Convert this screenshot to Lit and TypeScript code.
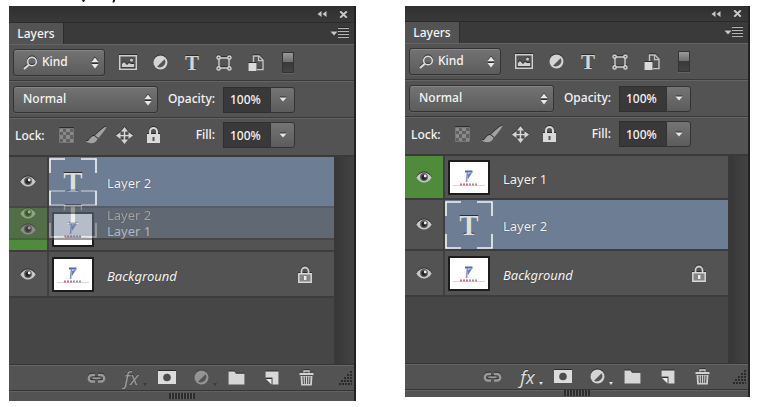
import { LitElement, html, css, svg, nothing, TemplateResult } from "lit";
import { customElement, property } from "lit/decorators.js";
import { classMap } from "lit/directives/class-map.js";

interface Layer {
  name: string;
  kind: "text" | "image";
  selected?: boolean;
  marked?: boolean;
  locked?: boolean;
}

const icon = (w: number, h: number, body: TemplateResult) =>
  html`<svg class="icon" width=${w} height=${h} viewBox="0 0 ${w} ${h}" aria-hidden="true">${body}</svg>`;

const icons = {
  search: icon(15, 14, svg`<circle cx="9" cy="5.5" r="4.3" fill="none" stroke="#dcdcdc" stroke-width="1.6"/><path d="M6 8.5L1 13" stroke="#dcdcdc" stroke-width="2"/>`),
  updown: icon(8, 12, svg`<path d="M0.5 5L4 0.5L7.5 5zM0.5 7L4 11.5L7.5 7z" fill="#e8e8e8"/>`),
  down: icon(8, 5, svg`<path d="M0.5 0.5h7L4 4.5z" fill="#e8e8e8"/>`),
  collapse: icon(10, 6, svg`<path d="M4.5 0v6L0.5 3zM9.5 0v6L5.5 3z" fill="#c8c8c8"/>`),
  close: icon(9, 7, svg`<path d="M1.2 0.3L7.8 6.7M7.8 0.3L1.2 6.7" stroke="#c8c8c8" stroke-width="2"/>`),
  menu: icon(20, 11, svg`<path d="M0.5 3.5h7L4 7.5z" fill="#c8c8c8"/><path d="M8 0.5h11M8 3.5h11M8 6.5h11M8 9.5h11" stroke="#b4b4b4"/>`),
  image: icon(18, 15, svg`<path d="M0.75 0.75h16.5v13.5H0.75z" fill="none" stroke="#cfcfcf" stroke-width="1.5"/><path d="M3 12V9l2-2 2 2 1 1 2-2 2 1 3 0v3z" fill="#cfcfcf"/><circle cx="12.5" cy="5" r="1.5" fill="#cfcfcf"/>`),
  adjust: icon(15, 15, svg`<circle cx="7.5" cy="7.5" r="7" fill="#d4d4d4"/><path d="M11.6 4.2A5.6 5.6 0 0 1 4 11.8z" fill="#555"/>`),
  shape: icon(16, 16, svg`<path d="M4 3h8M4 13h8M3 4v8M13 4v8" stroke="#cfcfcf" stroke-width="1.5"/><g fill="#555" stroke="#d4d4d4" stroke-width="1.5"><circle cx="2.6" cy="2.6" r="1.6"/><circle cx="13.4" cy="2.6" r="1.6"/><circle cx="2.6" cy="13.4" r="1.6"/><circle cx="13.4" cy="13.4" r="1.6"/></g>`),
  smart: icon(16, 16, svg`<path d="M5.5 7V1h5.5l4 4v9.5H9" fill="none" stroke="#c4c4c4" stroke-width="1.5"/><path d="M10.5 1v4.5H15" fill="none" stroke="#c4c4c4" stroke-width="1.3"/><path d="M0.5 8h8v8h-8z" fill="#dadada"/>`),
  checker: icon(15, 15, svg`<path d="M0.5 0.5h14v14h-14z" fill="#606060" stroke="#777"/><path d="M1 1h3v3H1zM7 1h4v3H7zM4 4h3v3H4zM11 4h3v3h-3zM1 7h3v4H1zM7 7h4v4H7zM4 11h3v3H4zM11 11h3v3h-3z" fill="#8a8a8a"/>`),
  brush: icon(22, 18, svg`<path d="M21.5 0.5Q22 2 13.5 12L10 9.5Q19 0.5 21.5 0.5z" fill="#a2a2a2"/><path d="M9.5 10L12.5 12.5Q11.5 16.8 7 17.3Q3 17.5 0.5 15.5Q4 15 5 12.5Q6.5 9.5 9.5 10z" fill="#a2a2a2"/>`),
  move: icon(17, 17, svg`<path d="M8.5 2v13M2 8.5h13" stroke="#d4d4d4" stroke-width="1.6"/><path d="M8.5 0L12 4.5H5zM8.5 17L12 12.5H5zM0 8.5L4.5 5v7zM17 8.5L12.5 5v7z" fill="#d4d4d4"/>`),
  lock: icon(13, 16, svg`<path d="M3 8V4.5a3.5 3.5 0 0 1 7 0V8" fill="none" stroke="#d8d8d8" stroke-width="2"/><path d="M0 7h13v9H0z" fill="#dadada"/><path d="M5.5 10h2v4h-2z" fill="#555"/>`),
  rowLock: icon(14, 17, svg`<path d="M3.5 8V5a3.5 3.5 0 0 1 7 0v3" fill="none" stroke="#cfcfcf" stroke-width="1.8"/><path d="M0.8 7.8h12.4v8.4H0.8z" fill="#858585" stroke="#d8d8d8" stroke-width="1.5"/><path d="M6 10h2.4v4H6z" fill="#eee"/>`),
  eye: icon(16, 11, svg`<path d="M0.3 5.5Q3.5 0.4 8 0.4T15.7 5.5Q12.5 10.6 8 10.6T0.3 5.5z" fill="#c8c8c8"/><circle cx="8" cy="5" r="3.9" fill="#5c5c5c"/><circle cx="8" cy="5.2" r="2.5" fill="#222"/><circle cx="9.2" cy="4" r="1.4" fill="#eee"/>`),
  link: icon(19, 10, svg`<path d="M8 2H5a3 3 0 0 0 0 6.5h3M11 2h3a3 3 0 0 1 0 6.5h-3" fill="none" stroke="#999" stroke-width="2.4"/><path d="M5.5 5.2h8" stroke="#999" stroke-width="1.8"/>`),
  mask: icon(18, 13, svg`<path d="M0 0h18v13H0z" fill="#dcdcdc"/><circle cx="9" cy="6.5" r="3.8" fill="#4e4e4e"/>`),
  folder: icon(17, 14, svg`<path d="M0.5 0.5h6l1.5 2.2h8.5V13.5H0.5z" fill="#d6d6d6"/>`),
  page: icon(14, 14, svg`<path d="M0.5 0.5h13v13h-6V6.5h-7z" fill="#d8d8d8"/><path d="M1 8h5.5v5.5z" fill="#ececec"/>`),
  trash: icon(15, 16, svg`<path d="M5 2.5V1h5v1.5" fill="none" stroke="#cfcfcf" stroke-width="1.4"/><path d="M0.5 2.8h14v2.4H0.5z" fill="#d2d2d2"/><path d="M1.5 6h12L12.8 15.5H2.2z" fill="#cfcfcf"/><path d="M4 6.5l.4 7.5M6.4 6.5v7.5M8.7 6.5v7.5M11 6.5l-.4 7.5" stroke="#505050" stroke-width="1.1"/>`),
  corner: icon(13, 14, svg`<g stroke="#2b2b2b" stroke-width="2" stroke-dasharray="2 1"><path d="M11 1h2M8 4h5M5 7h8M2 10h11M0 13h13"/></g>`),
};

const picture = svg`
  <path d="M0 0h38v31H0z" fill="#fff"/>
  <path d="M15 9.5h7.5" stroke="#5566ae" stroke-width="2"/>
  <path d="M17.5 10l-1 10" stroke="#8390c4" stroke-width="1.6"/>
  <path d="M22.5 10L18 17V12z" fill="#6a79b8"/>
  <path d="M3 23.5h32" stroke="#d3d9e3"/>
  <path d="M10 22.5h9" stroke="#cf6a80" stroke-width="2" stroke-dasharray="2 1"/>
  <path d="M19 22.5h8" stroke="#ab8aac" stroke-width="2" stroke-dasharray="2 1"/>`;

@customElement("layer-row")
class LayerRow extends LitElement {
  @property({ attribute: false }) layer!: Layer;

  static styles = css`
    :host { display: block; }
    .row {
      display: grid;
      grid-template-columns: 38px 1fr;
      border-bottom: 2px solid #3c3c3c;
      background: #535353;
      color: #f4f4f4;
      height: 44px;
      box-sizing: border-box;
    }
    .row.background { height: 46px; }
    .row.selected { height: 51px; }
    .eye {
      display: grid;
      place-items: center;
      border: 0;
      border-right: 2px solid #404040;
      padding: 0;
      width: 40px;
      background: #535353;
    }
    .marked .eye { background: #4f8b3a; }
    .body {
      display: flex;
      align-items: center;
      margin-left: 2px;
      padding: 0 22px 0 3px;
    }
    .selected .body { background: #6c7d94; padding-left: 0; }
    .thumb { border: 2px solid #1c1c1c; border-radius: 1px; display: block; }
    .type {
      display: grid;
      width: 48px;
      height: 48px;
      place-items: center;
      font: bold 29px/48px "Liberation Serif", serif;
      color: #dedede;
      text-shadow: 0 -1px 0 #2c2c2c;
    }
    .type > * { grid-area: 1 / 1; }
    .name {
      flex: 1;
      padding: 3px 0 0 13px;
      font-size: 13px;
      font-weight: 400;
      line-height: 16px;
      text-shadow: 0 0 1px #333;
    }
    .selected .name { padding-left: 10px; }
    .background .name { font-style: italic; }
    .icon { display: block; filter: drop-shadow(0 -1px 0 #2c2c2c); }
  `;

  render() {
    const { name, kind, selected, marked, locked } = this.layer;
    return html`
      <div class=${classMap({ row: true, selected: !!selected, marked: !!marked, background: !!locked })}>
        <button class="eye" aria-label="Toggle visibility of ${name}">${icons.eye}</button>
        <div class="body">
          ${kind === "text"
            ? html`<span class="type">
                <svg width="48" height="48" viewBox="0 0 48 48" aria-hidden="true">
                  <path d="M1 15V1h15M32 1h15v14M47 33v14H32M16 47H1V33" fill="none" stroke="#f2f4f6" stroke-width="1.6" />
                </svg>
                <span aria-hidden="true">T</span>
              </span>`
            : html`<svg class="thumb" width="38" height="31" viewBox="0 0 38 31" aria-hidden="true">${picture}</svg>`}
          <span class="name">${name}</span>
          ${locked ? icons.rowLock : nothing}
        </div>
      </div>`;
  }
}

@customElement("layers-panel")
class LayersPanel extends LitElement {
  @property({ attribute: false }) layers: Layer[] = [];
  @property({ attribute: false }) dragged?: Layer;
  @property({ type: Boolean, reflect: true }) compact = false;

  static styles = css`
    :host {
      display: block;
      box-sizing: border-box;
      border-right: 2px solid #222;
      background: #535353;
      color: #f4f4f4;
      font-size: 12px;
      font-weight: 500;
    }
    button, select, input { font: inherit; color: inherit; margin: 0; }
    .icon { display: block; filter: drop-shadow(0 -1px 0 #2c2c2c); }
    .tool, .small {
      display: grid;
      place-items: center;
      border: 0;
      padding: 0;
      background: none;
    }
    .title {
      display: flex;
      align-items: center;
      justify-content: flex-end;
      gap: 12px;
      height: 16px;
      padding-right: 6px;
      background: linear-gradient(#303030, #393939);
      border-bottom: 1px solid #2a2a2a;
    }
    :host([compact]) .title { height: 15px; }
    .tabs {
      display: flex;
      justify-content: space-between;
      align-items: center;
      height: 21px;
      padding-right: 4px;
      background: #3a3a3a;
    }
    .tab {
      height: 21px;
      width: 55px;
      padding: 0;
      border: 0;
      border-right: 1px solid #2c2c2c;
      background: #535353;
    }
    .line {
      display: flex;
      align-items: center;
      box-sizing: border-box;
      height: 37px;
      padding: 0 4px;
      border-top: 1px solid #646464;
      border-bottom: 1px solid #3a3a3a;
    }
    .line.last { height: 39px; padding-bottom: 4px; border-bottom: 2px solid #3a3a3a; }
    .pick { display: grid; align-items: center; }
    .pick > * { grid-area: 1 / 1; }
    .pick .icon { pointer-events: none; }
    .pick .lead { margin-left: 10px; }
    .pick .arrows { justify-self: end; margin-right: 6px; }
    select {
      appearance: none;
      box-sizing: border-box;
      height: 27px;
      width: 100%;
      padding: 0 0 2px 9px;
      border: 1px solid #333;
      border-radius: 3px;
      background: linear-gradient(#737373, #5c5c5c);
      box-shadow: inset 0 1px 0 #858585, 0 1px 0 #606060;
    }
    .kind { width: 92px; }
    .kind select { padding-left: 28px; }
    .mode { width: 145px; }
    .filters { display: flex; margin-left: 7px; }
    .filters .tool { width: 32px; height: 24px; }
    .glyph {
      font: bold 21px/20px "Liberation Serif", serif;
      color: #d4d4d4;
      text-shadow: 0 -1px 0 #2c2c2c;
    }
    .switch {
      width: 12px;
      height: 21px;
      box-sizing: border-box;
      border: 1px solid #333;
      background: linear-gradient(#9a9a9a, #707070 45%, #3a3a3a 50%, #444);
      box-shadow: 0 1px 0 #646464;
    }
    .locks { display: flex; align-items: center; width: 145px; }
    .caption { flex: none; width: 39px; box-sizing: border-box; padding: 0 0 0 2px; }
    .keys { display: flex; flex: none; }
    .keys .tool { width: 29px; flex: none; }
    .amount { flex: none; width: 57px; text-align: right; padding-bottom: 2px; }
    .field { display: flex; margin-left: 8px; }
    input {
      box-sizing: border-box;
      width: 47px;
      height: 26px;
      padding: 0 0 0 6px;
      border: 1px solid #2f2f2f;
      border-right: 0;
      background: #393939;
    }
    .drop {
      box-sizing: border-box;
      width: 25px;
      height: 26px;
      padding: 0;
      display: grid;
      place-items: center;
      border: 1px solid #333;
      border-radius: 0 3px 3px 0;
      background: linear-gradient(#747474, #5c5c5c);
    }
    .list {
      position: relative;
      display: grid;
      grid-template-columns: 1fr 20px;
      background: #464646;
    }
    .rows { min-height: 207px; }
    .gutter {
      background: linear-gradient(90deg, #373737, #434343);
      border-left: 1px solid #3a3a3a;
    }
    .ghost {
      position: absolute;
      top: 32px;
      left: 0;
      right: 20px;
      opacity: 0.5;
      pointer-events: none;
    }
    .footer {
      display: flex;
      align-items: center;
      height: 25px;
      padding-left: 70px;
      border-top: 1px solid #353535;
      box-shadow: inset 0 1px 0 #666;
    }
    .footer .tool { width: 35px; height: 24px; flex: none; position: relative; }
    .footer .end { margin-left: auto; padding: 0 2px 0 0; }
    .end .icon { filter: none; }
    .fx { font: italic 500 18px/20px "Open Sans", sans-serif; color: #e0e0e0; text-shadow: 0 -1px 0 #333; }
    .more::after {
      content: "";
      position: absolute;
      right: 2px;
      bottom: 4px;
      border: 2px solid transparent;
      border-top: 3px solid #dcdcdc;
      border-bottom: 0;
    }
    .dim > * { opacity: 0.5; }
    .dim::after { border-top-color: #3c3c3c; }
    .handle {
      display: grid;
      place-items: end center;
      height: 10px;
      border-top: 1px solid #353535;
      box-shadow: inset 0 1px 0 #626262;
    }
    :host([compact]) .handle { height: 7px; }
    .ribs {
      width: 26px;
      height: 6px;
      margin-bottom: 2px;
      background: repeating-linear-gradient(90deg, #2c2c2c 0 2px, #626262 2px 3px);
    }
    :host([compact]) .ribs { margin-bottom: 1px; }
  `;

  private amount(label: string, id: string) {
    return html`
      <label class="amount" for=${id}>${label}</label>
      <span class="field">
        <input id=${id} type="text" value="100%" />
        <button class="drop" aria-label="${label} slider">${icons.down}</button>
      </span>`;
  }

  render() {
    const dim = { tool: true, more: true, dim: !this.compact };
    return html`
      <div class="title">
        <button class="small" aria-label="Collapse">${icons.collapse}</button>
        <button class="small" aria-label="Close">${icons.close}</button>
      </div>
      <div class="tabs">
        <button class="tab">Layers</button>
        <button class="small" aria-label="Panel menu">${icons.menu}</button>
      </div>
      <div class="line">
        <span class="pick kind">
          <select aria-label="Filter type"><option>Kind</option></select>
          <span class="lead">${icons.search}</span>
          <span class="arrows">${icons.updown}</span>
        </span>
        <span class="filters">
          <button class="tool" aria-label="Pixel layers">${icons.image}</button>
          <button class="tool" aria-label="Adjustment layers">${icons.adjust}</button>
          <button class="tool" aria-label="Type layers"><span class="glyph">T</span></button>
          <button class="tool" aria-label="Shape layers">${icons.shape}</button>
          <button class="tool" aria-label="Smart objects">${icons.smart}</button>
          <button class="tool" aria-label="Filtering on or off"><span class="switch"></span></button>
        </span>
      </div>
      <div class="line">
        <span class="pick mode">
          <select aria-label="Blend mode"><option>Normal</option></select>
          <span class="arrows">${icons.updown}</span>
        </span>
        ${this.amount("Opacity:", "opacity")}
      </div>
      <div class="line last">
        <span class="locks">
          <span class="caption">Lock:</span>
          <span class="keys">
            <button class="tool" aria-label="Lock transparent pixels">${icons.checker}</button>
            <button class="tool" aria-label="Lock image pixels">${icons.brush}</button>
            <button class="tool" aria-label="Lock position">${icons.move}</button>
            <button class="tool" aria-label="Lock all">${icons.lock}</button>
          </span>
        </span>
        ${this.amount("Fill:", "fill")}
      </div>
      <div class="list">
        <div class="rows">
          ${this.layers.map((layer) => html`<layer-row .layer=${layer}></layer-row>`)}
        </div>
        <div class="gutter"></div>
        ${this.dragged ? html`<layer-row class="ghost" .layer=${this.dragged}></layer-row>` : nothing}
      </div>
      <div class="footer">
        <button class="tool" aria-label="Link layers">${icons.link}</button>
        <button class=${classMap(dim)} aria-label="Layer style"><span class="fx">fx</span></button>
        <button class="tool" aria-label="Add mask">${icons.mask}</button>
        <button class=${classMap(dim)} aria-label="New adjustment layer">${icons.adjust}</button>
        <button class="tool" aria-label="New group">${icons.folder}</button>
        <button class="tool" aria-label="New layer">${icons.page}</button>
        <button class="tool" aria-label="Delete layer">${icons.trash}</button>
        <span class="end">${icons.corner}</span>
      </div>
      <div class="handle"><span class="ribs"></span></div>`;
  }
}

const typeLayer: Layer = { name: "Layer 2", kind: "text", selected: true };
const imageLayer: Layer = { name: "Layer 1", kind: "image", marked: true };
const base: Layer = { name: "Background", kind: "image", locked: true };

@customElement("app-root")
class AppRoot extends LitElement {
  static styles = css`
    :host {
      display: block;
      min-height: 100vh;
      background: #fff;
      font-family: "Noto Sans", "Open Sans", sans-serif;
    }
    .marks { display: block; height: 6px; }
    .panels {
      display: grid;
      grid-template-columns: 347fr 345fr;
      align-items: start;
      gap: 49px;
      padding: 0 8px 0 9px;
    }
  `;

  render() {
    return html`
      <svg class="marks" width="130" height="6" viewBox="0 0 130 6" aria-hidden="true">
        <path d="M82 0h3l-1 2h-1zM113 0h2v1l-1 1.5h-1.5z" fill="#111" />
      </svg>
      <div class="panels">
        <layers-panel .layers=${[typeLayer, imageLayer, base]} .dragged=${typeLayer}></layers-panel>
        <layers-panel compact .layers=${[imageLayer, typeLayer, base]}></layers-panel>
      </div>`;
  }
}
